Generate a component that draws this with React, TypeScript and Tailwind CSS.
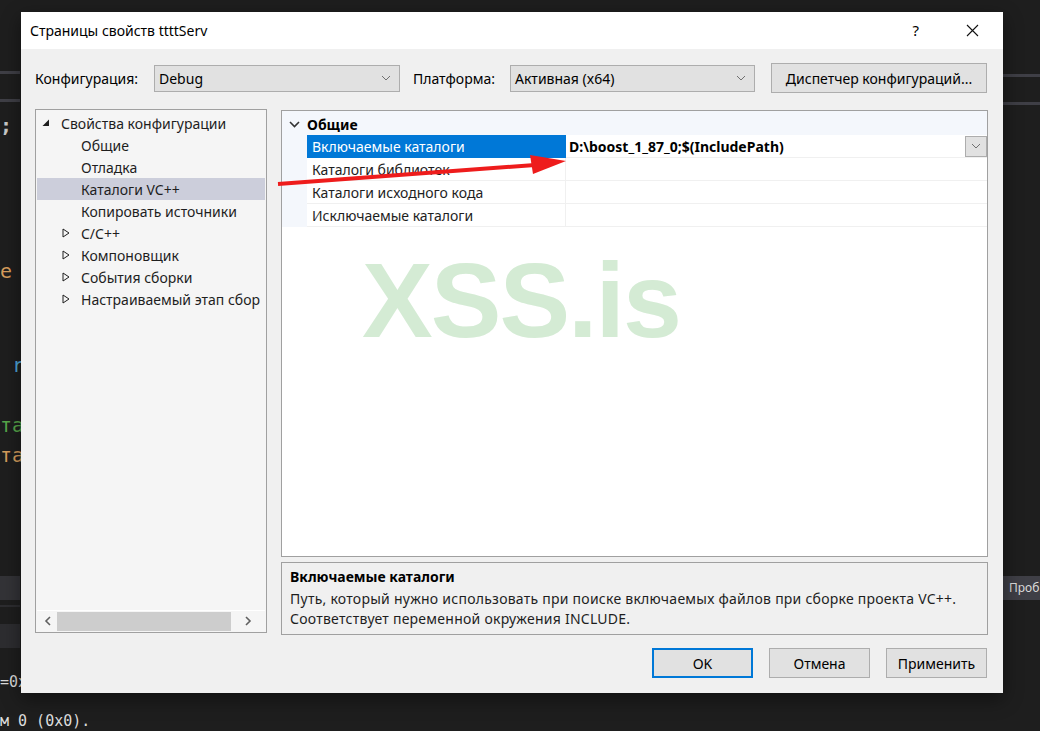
import React from "react"

const ui = { fontFamily: '"Noto Sans", "Open Sans", sans-serif' }
const mono = { fontFamily: '"DejaVu Sans Mono", "Liberation Mono", monospace' }

const Chevron: React.FC<{ className?: string }> = ({ className }) => (
    <svg width="10" height="6" viewBox="0 0 10 6" className={className}>
        <polyline points="1,1 5,5 9,1" fill="none" stroke="#707070" strokeWidth="1" />
    </svg>
)

const Select: React.FC<{ value: string; w: string }> = ({ value, w }) => (
    <div className={`${w} h-[27px] flex items-center justify-between bg-[#e1e1e1] border border-[#adadad] pl-[4px] pr-[8px] text-[14px] text-black`}>
        <span>{value}</span>
        <Chevron />
    </div>
)

const Btn: React.FC<{ label: string; primary?: boolean; w?: string }> = ({ label, primary, w = "w-[101px]" }) => (
    <div
        className={`${w} h-[30px] flex items-center justify-center bg-[#e1e1e1] text-[14px] text-black ${primary ? "border-2 border-[#0078d7]" : "border border-[#adadad]"}`}
    >
        {label}
    </div>
)

const Expanded = () => (
    <svg width="8" height="8" viewBox="0 0 8 8" className="shrink-0">
        <polygon points="7,0.5 7,7 0.5,7" fill="#1e1e1e" />
    </svg>
)

const Collapsed = () => (
    <svg width="8" height="10" viewBox="0 0 8 10" className="shrink-0">
        <polygon points="1,1 7,5 1,9" fill="none" stroke="#1e1e1e" strokeWidth="1" />
    </svg>
)

type TreeItem = { label: string; level: 0 | 1; icon?: "exp" | "col"; selected?: boolean }

const tree: TreeItem[] = [
    { label: "Свойства конфигурации", level: 0, icon: "exp" },
    { label: "Общие", level: 1 },
    { label: "Отладка", level: 1 },
    { label: "Каталоги VC++", level: 1, selected: true },
    { label: "Копировать источники", level: 1 },
    { label: "C/C++", level: 1, icon: "col" },
    { label: "Компоновщик", level: 1, icon: "col" },
    { label: "События сборки", level: 1, icon: "col" },
    { label: "Настраиваемый этап сбор", level: 1, icon: "col" },
]

const rows = [
    { name: "Включаемые каталоги", value: "D:\\boost_1_87_0;$(IncludePath)", selected: true },
    { name: "Каталоги библиотек", value: "" },
    { name: "Каталоги исходного кода", value: "" },
    { name: "Исключаемые каталоги", value: "" },
]

export default function App() {
    return (
        <div className="relative w-[1040px] h-[731px] overflow-hidden bg-[#1e1e1e]" style={ui}>
            {/* editor behind the dialog */}
            <div className="absolute left-0 top-[71px] w-[20px] h-[3px] bg-[#3f3f46]" />
            <div className="absolute left-0 top-[99px] w-[20px] h-[3px] bg-[#3f3f46]" />
            <div className="absolute left-[1003px] top-[74px] w-[40px] h-[3px] bg-[#3f3f46]" />
            <div className="absolute left-[1003px] top-[102px] w-[40px] h-[3px] bg-[#3f3f46]" />
            <div className="absolute left-0 top-[110px] text-[20px] font-bold text-[#c8c8c8]" style={mono}>;</div>
            <div className="absolute left-0 top-[256px] text-[20px] text-[#d69d5c]" style={mono}>e</div>
            <div className="absolute left-[12px] top-[350px] text-[20px] text-[#4fa5d8]" style={mono}>r</div>
            <div className="absolute left-0 top-[410px] text-[20px] text-[#57a64a]" style={mono}>та</div>
            <div className="absolute left-0 top-[440px] text-[20px] text-[#d69d5c]" style={mono}>та</div>
            <div className="absolute left-0 top-[576px] w-[20px] h-[24px] bg-[#333337]" />
            <div className="absolute left-0 top-[605px] w-[20px] h-[2px] bg-[#2d2d30]" />
            <div className="absolute left-0 top-[624px] w-[20px] h-[24px] bg-[#2d2d30]" />
            <div className="absolute left-[1003px] top-[576px] w-[37px] h-[24px] bg-[#3f3f46] pl-[6px] text-[12px] leading-[24px] text-[#dcdcdc] whitespace-nowrap">Проб</div>
            <div className="absolute left-0 top-[671px] text-[15px] text-[#dcdcdc]" style={mono}>=0x</div>
            <div className="absolute left-0 top-[710px] text-[15px] text-[#dcdcdc]" style={mono}>м 0 (0x0).</div>

            {/* dialog window */}
            <div className="absolute left-[21px] top-[12px] w-[982px] h-[681px] flex flex-col bg-[#f0f0f0] shadow-[0_6px_18px_rgba(0,0,0,0.45)]">
                <div className="h-[37px] shrink-0 bg-white flex items-center justify-between pl-[9px] pr-[24px]">
                    <span className="text-[14px] text-black">Страницы свойств ttttServ</span>
                    <div className="flex items-center gap-[47px] text-black">
                        <span className="text-[15px]">?</span>
                        <svg width="13" height="13" viewBox="0 0 13 13">
                            <path d="M1 1 L12 12 M12 1 L1 12" stroke="#111" strokeWidth="1.1" />
                        </svg>
                    </div>
                </div>

                <div className="flex-1 flex flex-col px-[14px] pt-[14px] pb-[15px]">
                    {/* configuration row */}
                    <div className="h-[30px] flex items-center text-[14px] text-black">
                        <span className="w-[119px]">Конфигурация:</span>
                        <Select value="Debug" w="w-[246px]" />
                        <span className="ml-[13px] w-[97px]">Платформа:</span>
                        <Select value="Активная (x64)" w="w-[245px]" />
                        <div className="ml-[16px]">
                            <Btn label="Диспетчер конфигураций..." w="w-[216px]" />
                        </div>
                    </div>

                    <div className="flex mt-[16px] gap-[14px]">
                        {/* tree */}
                        <div className="w-[232px] h-[524px] flex flex-col bg-[#f5f5f5] border border-[#a0a0a0] p-[1px] text-[14px] text-[#1e1e1e]">
                            <div className="flex-1 pt-[1px] overflow-hidden">
                                {tree.map((t) => (
                                    <div
                                        key={t.label}
                                        className={`h-[22px] flex items-center whitespace-nowrap overflow-hidden ${t.selected ? "bg-[#cccedb]" : ""} ${t.level === 0 ? "pl-[5px]" : "pl-[25px]"}`}
                                    >
                                        <span className="w-[19px] shrink-0 flex items-center">
                                            {t.icon === "exp" && <Expanded />}
                                            {t.icon === "col" && <Collapsed />}
                                        </span>
                                        <span>{t.label}</span>
                                    </div>
                                ))}
                            </div>
                            <div className="h-[21px] border-t border-white flex items-center">
                                <span className="w-[20px] flex justify-center">
                                    <svg width="7" height="10" viewBox="0 0 7 10">
                                        <polyline points="6,1 2,5 6,9" fill="none" stroke="#606060" strokeWidth="1.6" />
                                    </svg>
                                </span>
                                <div className="w-[174px] h-[19px] bg-[#cdcdcd]" />
                                <span className="flex-1 flex justify-center">
                                    <svg width="7" height="10" viewBox="0 0 7 10">
                                        <polyline points="1,1 5,5 1,9" fill="none" stroke="#606060" strokeWidth="1.6" />
                                    </svg>
                                </span>
                            </div>
                        </div>

                        {/* property grid + description */}
                        <div className="w-[707px] flex flex-col gap-[5px]">
                            <div className="relative h-[447px] mt-[1px] bg-white border border-[#a0a0a0]">
                                <div className="h-[24px] flex items-center bg-[#f4f7fc] pt-[2px]">
                                    <span className="w-[25px] flex justify-center">
                                        <svg width="11" height="7" viewBox="0 0 11 7">
                                            <polyline points="1,1 5.5,5.5 10,1" fill="none" stroke="#333" strokeWidth="1.6" />
                                        </svg>
                                    </span>
                                    <span className="text-[14px] font-bold text-black">Общие</span>
                                </div>
                                {rows.map((r) => (
                                    <div key={r.name} className="h-[23px] flex">
                                        <div className="w-[25px] bg-[#f4f7fc]" />
                                        <div
                                            className={`w-[259px] flex items-center pl-[5px] text-[14px] border-b border-r ${r.selected ? "bg-[#0078d7] text-white border-[#0078d7]" : "text-[#1e1e1e] border-[#f0f0f0]"}`}
                                        >
                                            {r.name}
                                        </div>
                                        <div className="flex-1 flex items-center justify-between pl-[3px] border-b border-[#f0f0f0] text-[14px] font-bold text-black">
                                            <span>{r.value}</span>
                                            {r.selected && (
                                                <div className="w-[22px] h-[21px] flex items-center justify-center bg-[#e1e1e1] border border-[#adadad]">
                                                    <Chevron />
                                                </div>
                                            )}
                                        </div>
                                    </div>
                                ))}

                                <div
                                    className="absolute left-[80px] top-[136px] text-[106px] font-bold text-[#d4ebd4] leading-none tracking-[-2px] select-none"
                                    style={{ fontFamily: '"Liberation Sans", Arial, sans-serif' }}
                                >
                                    XSS.is
                                </div>
                            </div>

                            <div className="h-[73px] bg-[#f0f0f0] border border-[#a0a0a0] px-[8px] pt-[4px] text-[14px] text-[#1e1e1e]">
                                <div className="font-bold text-black leading-[20px]">Включаемые каталоги</div>
                                <div className="leading-[21px] mt-[1px] tracking-[0.25px]">Путь, который нужно использовать при поиске включаемых файлов при сборке проекта VC++.</div>
                                <div className="leading-[20px] tracking-[0.25px]">Соответствует переменной окружения INCLUDE.</div>
                            </div>
                        </div>
                    </div>

                    {/* footer buttons */}
                    <div className="mt-auto flex justify-end gap-[16px] pr-[2px]">
                        <Btn label="OK" primary />
                        <Btn label="Отмена" />
                        <Btn label="Применить" />
                    </div>
                </div>
            </div>

            {/* red annotation arrow */}
            <svg className="absolute left-0 top-0 pointer-events-none" width="1040" height="731">
                <line x1="278" y1="184" x2="535" y2="165" stroke="#ee1c1c" strokeWidth="4" />
                <polygon points="566,161 530,155 533,174" fill="#ee1c1c" />
            </svg>
        </div>
    )
}
